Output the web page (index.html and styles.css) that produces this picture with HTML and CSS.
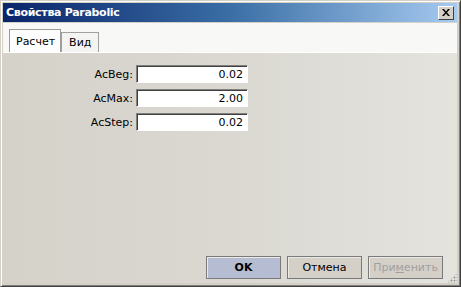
FILE: index.html
```html
<!DOCTYPE html>
<html lang="ru">
<head>
  <meta charset="UTF-8">
  <title>Свойства Parabolic</title>
  <link rel="stylesheet" href="styles.css">
</head>
<body>
  <div class="window">
    <div class="titlebar">
      <span class="title">Свойства Parabolic</span>
      <span class="close">
        <svg width="8" height="7" viewBox="0 0 8 7"><path d="M0 0h2l2 2.5L6 0h2L5 3.5 8 7H6L4 4.5 2 7H0l3-3.5z" fill="#000"/></svg>
      </span>
    </div>
    <div class="tabstrip">
      <div class="tab active">Расчет</div>
      <div class="tab">Вид</div>
    </div>
    <div class="panel">
      <form class="fields">
        <label class="row"><span>AcBeg:</span><input class="num" value="0.02"></label>
        <label class="row"><span>AcMax:</span><input class="num" value="2.00"></label>
        <label class="row"><span>AcStep:</span><input class="num" value="0.02"></label>
      </form>
      <div class="buttons">
        <button class="btn ok">OK</button>
        <button class="btn">Отмена</button>
        <button class="btn disabled">При<u>м</u>енить</button>
        <span class="grip"></span>
      </div>
    </div>
  </div>
</body>
</html>
```

FILE: styles.css
```css
body { margin:0; font-family:"DejaVu Sans", sans-serif; font-size:11px; }
.window { width:461px; height:287px; box-sizing:border-box; display:flex; flex-direction:column; background:#d4d0c8; border:1px solid; border-color:#d4d0c8 #404040 #404040 #d4d0c8; box-shadow:inset 1px 1px 0 #fff, inset -1px -1px 0 #808080; padding:2px 3px 3px 2px; }
.titlebar { height:19px; display:flex; align-items:center; justify-content:space-between; background:linear-gradient(to right, #0a246a, #3a6ea5 50%, #a6caf0); color:#fff; font-weight:bold; font-size:11px; padding:0 3px 0 3px; }
.title { letter-spacing:-0.3px; }
.close { width:16px; height:14px; box-sizing:border-box; background:#d4d0c8; border:1px solid; border-color:#fff #404040 #404040 #fff; display:flex; align-items:center; justify-content:center; }
.tabstrip { height:29px; margin-top:1px; background:#f8f8f6; display:flex; align-items:flex-end; padding-left:6px; border-bottom:1px solid #fff; }
.tab { height:19px; padding:0 7px; border:1px solid #a0a0a0; border-bottom:none; background:#f4f4f2; display:flex; align-items:center; color:#000; }
.tab.active { height:22px; background:#fdfdfd; border-color:#9c9c9c; padding:0 5px 0 6px; }
.panel { flex:1; display:flex; flex-direction:column; justify-content:space-between; background:linear-gradient(to right, #d5d2ca, #dad8d1 50%, #e4e3de); }
.fields { padding:12px 0 0 0; display:flex; flex-direction:column; gap:6px; width:245px; }
.row { display:flex; align-items:center; justify-content:flex-end; gap:3px; }
.num { width:112px; height:18px; box-sizing:border-box; border:1px solid; border-color:#808080 #fff #fff #808080; box-shadow:inset 1px 1px 0 #404040; padding:0 4px; text-align:right; font:11px "DejaVu Sans", sans-serif; background:#fff; margin:0; }
.buttons { position:relative; display:flex; justify-content:flex-end; gap:6px; padding:0 14px 4px 0; }
.btn { width:75px; height:23px; font:11px "DejaVu Sans", sans-serif; background:#d4d0c8; border:1px solid #7a7a7a; box-shadow:inset 1px 1px 0 #eceae4; color:#000; margin:0; padding:0; }
.btn.ok { background:#b6bdd2; font-weight:bold; }
.btn.disabled { color:#a0a0a0; }
.btn u { text-decoration:underline; }
.grip { position:absolute; right:0; bottom:0; width:10px; height:10px; background:radial-gradient(circle, #999 0.8px, transparent 1.2px) 0 0/3px 3px; clip-path:polygon(100% 0, 100% 100%, 0 100%); }
```
